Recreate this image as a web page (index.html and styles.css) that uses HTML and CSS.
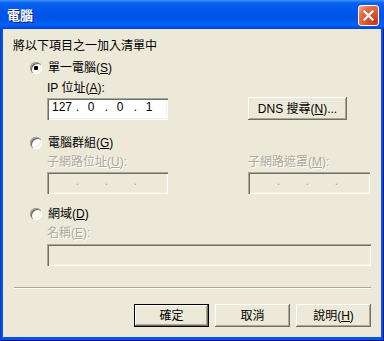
FILE: index.html
```html
<!DOCTYPE html>
<html lang="zh-Hant">
<head>
<meta charset="utf-8">
<link rel="stylesheet" href="styles.css">
</head>
<body>
<div class="window">
  <div class="titlebar">
    <span class="title">電腦</span>
    <button class="close" aria-label="關閉">
      <svg width="11" height="11" viewBox="0 0 11 11"><path d="M1.5 1.5 L9.5 9.5 M9.5 1.5 L1.5 9.5" stroke="#fff" stroke-width="2.2" stroke-linecap="square" fill="none"/></svg>
    </button>
  </div>
  <div class="client">
    <div class="intro">將以下項目之一加入清單中</div>

    <div class="opt opt-single"><span class="radio checked"></span><span>單一電腦(<u>S</u>)</span></div>
    <div class="grp">
      <div class="lbl lbl-ip">IP 位址(<u>A</u>):</div>
      <div class="ip-row">
        <div class="field ip-field">
          <span class="seg">127</span><span class="dot">.</span><span class="seg">0</span><span class="dot">.</span><span class="seg">0</span><span class="dot">.</span><span class="seg">1</span>
        </div>
        <button class="btn btn-dns">DNS 搜尋(<u>N</u>)...</button>
      </div>
    </div>

    <div class="opt opt-group"><span class="radio"></span><span>電腦群組(<u>G</u>)</span></div>
    <div class="grp subnets">
      <div class="col col-addr">
        <div class="lbl lbl-sub disabled">子網路位址(<u>U</u>):</div>
        <div class="field ip-field off">
          <span class="seg"></span><span class="dot">.</span><span class="seg"></span><span class="dot">.</span><span class="seg"></span><span class="dot">.</span><span class="seg"></span>
        </div>
      </div>
      <div class="col col-mask">
        <div class="lbl lbl-sub disabled">子網路遮罩(<u>M</u>):</div>
        <div class="field ip-field off">
          <span class="seg"></span><span class="dot">.</span><span class="seg"></span><span class="dot">.</span><span class="seg"></span><span class="dot">.</span><span class="seg"></span>
        </div>
      </div>
    </div>

    <div class="opt opt-domain"><span class="radio"></span><span>網域(<u>D</u>)</span></div>
    <div class="grp">
      <div class="lbl lbl-name disabled">名稱(<u>E</u>):</div>
      <div class="field name-field off"></div>
    </div>

    <div class="sep"></div>

    <div class="actions">
      <button class="btn btn-default">確定</button>
      <button class="btn">取消</button>
      <button class="btn">說明(<u>H</u>)</button>
    </div>
  </div>
</div>
</body>
</html>
```

FILE: styles.css
```css
* { box-sizing: border-box; }
html, body { margin: 0; padding: 0; }
body {
  width: 384px;
  height: 341px;
  overflow: hidden;
  font-family: "Liberation Sans", "Noto Sans CJK TC", sans-serif;
  font-size: 12px;
  line-height: 14px;
  color: #000;
  background: #0855dd;
}
u { text-decoration: underline; text-underline-offset: 1px; }

.window {
  width: 384px;
  height: 341px;
  display: flex;
  flex-direction: column;
  background: #0855dd;
  box-shadow: inset 1px 0 #0a3cc8, inset -1px 0 #00138c, inset 0 -1px #00138c;
}

.titlebar {
  height: 29px;
  flex: none;
  display: flex;
  align-items: flex-start;
  justify-content: space-between;
  padding: 5px 5px 0 7px;
  background: linear-gradient(to bottom, #3d95ff 0, #0a60ee 3px, #0058ee 10px, #0054e3 18px, #0062f8 24px, #0055ea 27px, #003dd7 29px);
}
.title {
  color: #fff;
  font-family: "Noto Sans CJK TC", sans-serif;
  font-weight: bold;
  font-size: 13px;
  line-height: 15px;
  margin-top: 2px;
  text-shadow: 1px 1px 0 #0a1a7a;
}
.close {
  width: 21px;
  height: 21px;
  padding: 0;
  border: 1px solid #fff;
  border-radius: 3px;
  background: radial-gradient(circle at 85% 85%, #c2391a 0%, #db5a35 45%, #e46e4a 70%, #f6b39c 100%);
  display: flex;
  align-items: center;
  justify-content: center;
}
.close svg { display: block; }

.client {
  flex: 1;
  margin: 0 3px 4px 3px;
  background: #ece9d8;
  padding: 10px 10px 0 10px;
}

.opt {
  display: flex;
  align-items: center;
  gap: 6px;
  height: 14px;
  margin-left: 17px;
}
.opt-single { margin-top: 8px; }
.opt-group { margin-top: 16px; }
.opt-domain { margin-top: 13px; }

.radio {
  flex: none;
  width: 12px;
  height: 12px;
  border-radius: 50%;
  background: #fff;
  position: relative;
  box-shadow: inset 1px 1px 0 #aca899, inset 2px 2px 0 #716f64, inset -1px -1px 0 #fff, inset -2px -2px 0 #f1efe2;
}
.radio.checked::after {
  content: "";
  position: absolute;
  left: 4px;
  top: 4px;
  width: 4px;
  height: 4px;
  border-radius: 1px;
  background: #000;
}

.grp { padding-left: 34px; }
.lbl-ip { margin-top: 6px; }
.lbl-sub { margin-top: 5px; }
.lbl-name { margin-top: 5px; }
.disabled { color: #aca899; text-shadow: 1px 1px 0 #fff; }

.ip-row {
  display: flex;
  align-items: flex-start;
  margin-top: 2px;
}

.field {
  height: 22px;
  background: #fff;
  box-shadow: inset 1px 1px 0 #aca899, inset 2px 2px 0 #716f64, inset -1px -1px 0 #fff, inset -2px -2px 0 #f1efe2;
}
.field.off { background: #ece9d8; }

.ip-field {
  width: 121px;
  display: flex;
  padding: 2px 0 0 3px;
}
.ip-row .ip-field { margin-top: 1px; }
.seg { width: 24px; text-align: center; }
.dot { width: 5px; text-align: right; }
.off .dot { color: #aca899; }

.subnets {
  display: flex;
  gap: 80px;
}
.col-addr { width: 121px; }
.col-mask { width: 122px; }
.col .field { margin-top: 3px; }
.col-mask .ip-field { width: 122px; }

.name-field { width: 324px; margin-top: 4px; }

.btn {
  height: 23px;
  width: 75px;
  padding: 0;
  border: none;
  background: #ece9d8;
  font: inherit;
  color: #000;
  box-shadow: inset -1px -1px 0 #716f64, inset 1px 1px 0 #fff, inset -2px -2px 0 #aca899, inset 2px 2px 0 #ece9d8;
}
.btn-dns { width: 99px; margin-left: 80px; }
.btn-default { border: 1px solid #000; }

.sep {
  height: 2px;
  margin: 21px 0 0 1px;
  border-top: 1px solid #aca899;
  border-bottom: 1px solid #fff;
}

.actions {
  display: flex;
  justify-content: flex-end;
  gap: 6px;
  margin-top: 15px;
}
```
